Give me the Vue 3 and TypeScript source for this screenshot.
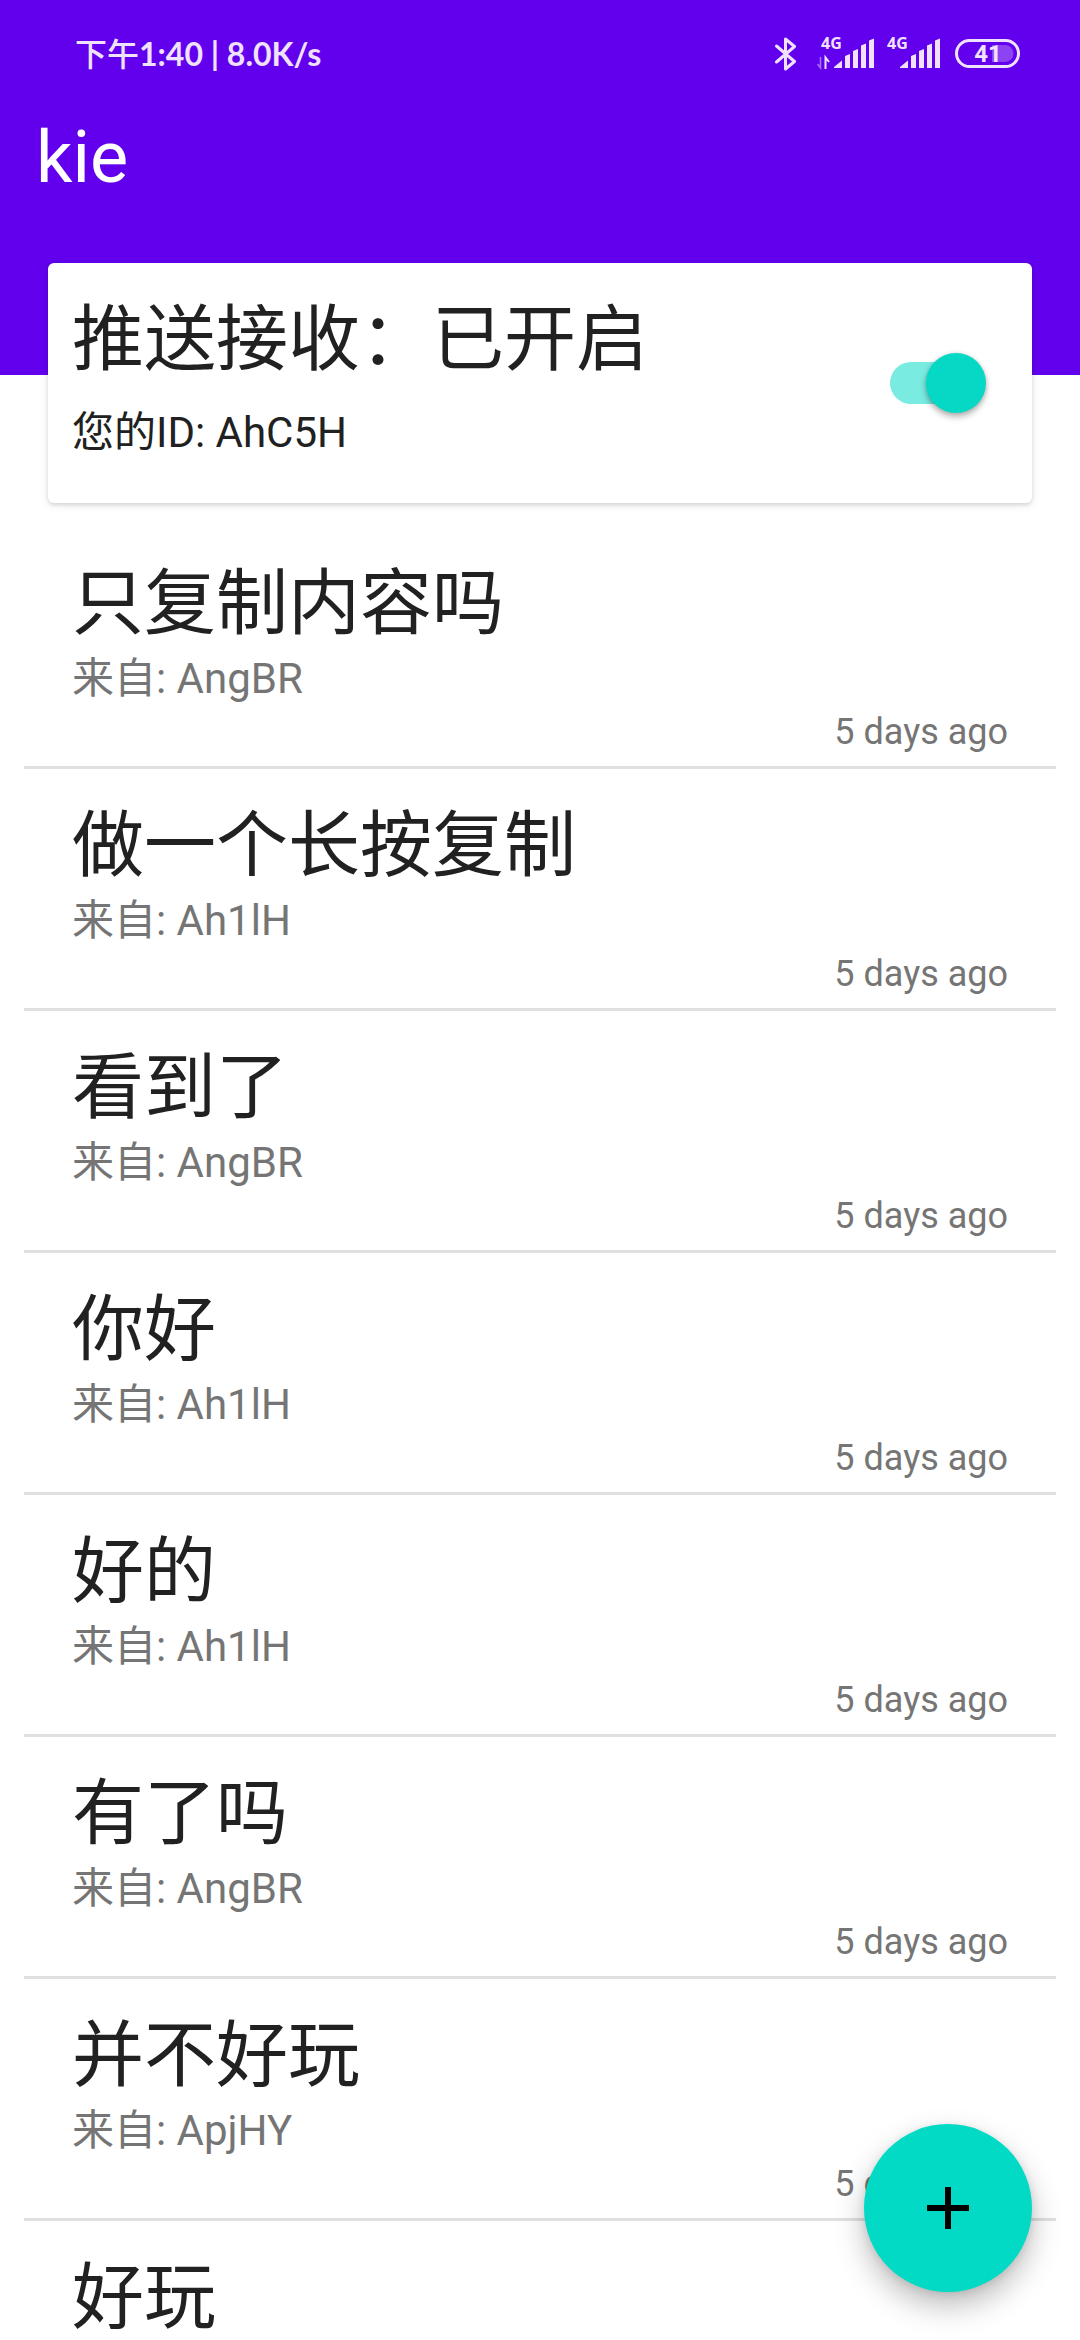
<script setup lang="ts">
import { ref } from 'vue'

interface Message {
  title: string
  from?: string
  time?: string
}

const receiving = ref(true)

const messages: Message[] = [
  { title: '只复制内容吗', from: 'AngBR', time: '5 days ago' },
  { title: '做一个长按复制', from: 'Ah1lH', time: '5 days ago' },
  { title: '看到了', from: 'AngBR', time: '5 days ago' },
  { title: '你好', from: 'Ah1lH', time: '5 days ago' },
  { title: '好的', from: 'Ah1lH', time: '5 days ago' },
  { title: '有了吗', from: 'AngBR', time: '5 days ago' },
  { title: '并不好玩', from: 'ApjHY', time: '5 days ago' },
  { title: '好玩' },
]
</script>

<template>
  <div class="screen">
    <header class="app-bar">
      <div class="status">
        <span class="clock"><span class="period">下午</span>1:40 | 8.0K/s</span>
        <div class="indicators">
          <svg class="bluetooth" width="22" height="36" viewBox="0 0 22 36" aria-hidden="true">
            <path d="M1.5 10 L19.5 25.500 L10.500 33 V3 L19.500 10.500 L1.500 26" fill="none" stroke="currentColor" stroke-width="3" stroke-linejoin="round" stroke-linecap="round" />
          </svg>
          <svg class="signal" width="58" height="52" viewBox="0 -8 58 52" aria-hidden="true">
            <text x="4" y="13" class="net">4G</text>
            <path d="M3.500 21 V32 L0.500 28" fill="none" stroke="currentColor" stroke-width="1.500" opacity="0.500" />
            <path d="M8.500 33 V21.500 L12 26" fill="none" stroke="currentColor" stroke-width="2" />
            <g fill="currentColor">
              <path d="M17 32 V31 L25 24.500 V32 Z" />
              <path d="M28 32 V20 L33 18 V32 Z" />
              <path d="M36 32 V15 L41 13 V32 Z" />
              <path d="M44 32 V9.500 L49 7.500 V32 Z" />
              <path d="M52 32 V4.500 L57 2.500 V32 Z" />
            </g>
          </svg>
          <svg class="signal" width="58" height="52" viewBox="0 -8 58 52" aria-hidden="true">
            <text x="4" y="13" class="net">4G</text>
            <g fill="currentColor">
              <path d="M17 32 V31 L25 24.500 V32 Z" />
              <path d="M28 32 V20 L33 18 V32 Z" />
              <path d="M36 32 V15 L41 13 V32 Z" />
              <path d="M44 32 V9.500 L49 7.500 V32 Z" />
              <path d="M52 32 V4.500 L57 2.500 V32 Z" />
            </g>
          </svg>
          <svg class="battery" width="66" height="36" viewBox="0 0 66 36" aria-hidden="true">
            <rect x="2.500" y="4.500" width="62" height="26" rx="13" fill="none" stroke="currentColor" stroke-width="3" />
            <path d="M38 9 H51 A8.500 8.500 0 0 1 51 26 H38 Z" fill="currentColor" opacity="0.300" />
            <text x="34" y="26" class="level">41</text>
          </svg>
        </div>
      </div>
      <h1 class="app-title">kie</h1>
    </header>

    <section class="card">
      <div class="card-text">
        <label class="headline" for="receive">推送接收：已开启</label>
        <p class="own-id">您的ID: AhC5H</p>
      </div>
      <input id="receive" v-model="receiving" class="switch" type="checkbox" role="switch" />
    </section>

    <ul class="list">
      <li v-for="(m, i) in messages" :key="i" class="row">
        <h2 class="headline">{{ m.title }}</h2>
        <p v-if="m.from" class="from">来自: {{ m.from }}</p>
        <time v-if="m.time" class="time">{{ m.time }}</time>
      </li>
    </ul>

    <button class="fab" type="button" aria-label="Add">
      <svg width="72" height="72" viewBox="0 0 24 24" aria-hidden="true">
        <path d="M19 13h-6v6h-2v-6H5v-2h6V5h2v6h6v2z" fill="#000" />
      </svg>
    </button>
  </div>
</template>

<style>
body {
  margin: 0;
  background: #fff;
}
</style>

<style scoped>
.screen {
  position: relative;
  height: 100vh;
  overflow: hidden;
  background: #fff;
  color: #212121;
  font-family: Roboto, 'Noto Sans CJK SC', sans-serif;
}

.app-bar {
  box-sizing: border-box;
  height: 375px;
  background: #6200ee;
  color: #fff;
}

.status {
  display: flex;
  align-items: center;
  justify-content: space-between;
  height: 108px;
  padding: 0 60px 0 75px;
  color: #f0e2fd;
}

.clock {
  font: 700 32px/48px Lato, 'Noto Sans CJK SC', sans-serif;
}

.period {
  font-weight: 500;
}

.indicators {
  display: flex;
  align-items: center;
}

.bluetooth {
  margin-right: 20px;
}

.signal {
  margin-right: 8px;
}

.battery {
  margin-left: 5px;
}

.net {
  font: 700 16px 'Open Sans', sans-serif;
  fill: currentColor;
}

.level {
  font: 700 24px Roboto, sans-serif;
  fill: currentColor;
  text-anchor: middle;
}

.app-title {
  margin: 0;
  padding: 0 36px;
  font-size: 72px;
  font-weight: 400;
  line-height: 100px;
}

.card {
  position: relative;
  display: flex;
  align-items: center;
  justify-content: space-between;
  box-sizing: border-box;
  height: 240px;
  margin: -112px 48px 24px;
  padding: 0 46px 0 24px;
  border-radius: 6px;
  background: #fff;
  box-shadow: 0 2px 4px rgba(0, 0, 0, 0.14), 0 2px 12px rgba(0, 0, 0, 0.06);
}

.card-text {
  align-self: flex-start;
  padding-top: 27px;
}

.headline {
  display: block;
  margin: 0;
  font-size: 72px;
  font-weight: 400;
  line-height: 100px;
}

.own-id {
  margin: 18px 0 0;
  font-size: 42px;
  line-height: 50px;
}

.switch {
  appearance: none;
  display: flex;
  align-items: center;
  width: 96px;
  height: 60px;
  margin: 0;
  cursor: pointer;
}

.switch::before {
  content: '';
  flex: 1;
  height: 42px;
  margin-right: -30px;
  border-radius: 21px;
  background: #79ebe0;
}

.switch::after {
  content: '';
  width: 60px;
  height: 60px;
  border-radius: 50%;
  background: #05d8c4;
  box-shadow: 0 4px 6px rgba(0, 0, 0, 0.28), 0 0 4px rgba(0, 0, 0, 0.12);
}

.switch:not(:checked) {
  transform: scaleX(-1);
  filter: grayscale(1);
}

.list {
  margin: 0 24px;
  padding: 0;
  list-style: none;
}

.row {
  display: flex;
  flex-direction: column;
  box-sizing: border-box;
  height: 242px;
  padding: 27px 48px 0;
  border-bottom: 3px solid #e0e0e0;
}

.from {
  margin: 0;
  color: #757575;
  font-size: 42px;
  line-height: 50px;
}

.time {
  align-self: flex-end;
  margin-top: 7px;
  color: #757575;
  font-size: 36px;
  line-height: 42px;
}

.fab {
  position: absolute;
  right: 48px;
  bottom: 48px;
  display: flex;
  align-items: center;
  justify-content: center;
  width: 168px;
  height: 168px;
  padding: 0;
  border: 0;
  border-radius: 50%;
  background: #03dac6;
  box-shadow: 0 14px 30px rgba(0, 0, 0, 0.26), 0 2px 8px rgba(0, 0, 0, 0.1);
  cursor: pointer;
}

.fab svg {
  display: block;
}
</style>
